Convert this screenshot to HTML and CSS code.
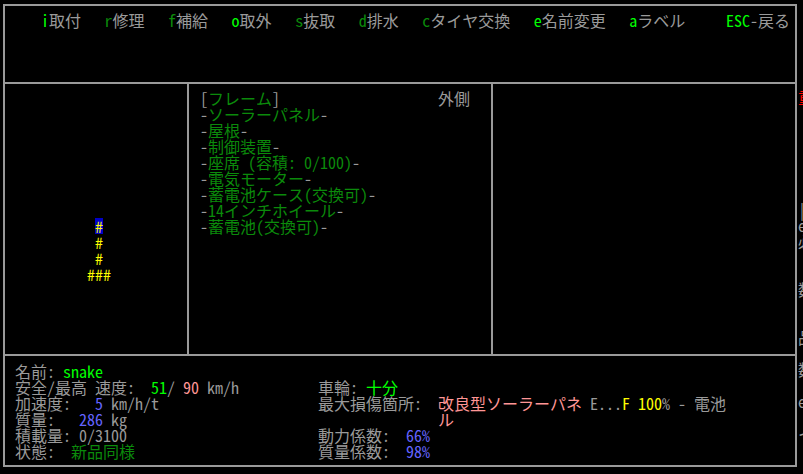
FILE: index.html
```html
<!DOCTYPE html>
<html>
  <head>
    <meta charset='utf-8'>
    <title>Vehicle Interaction</title>
    <link rel="stylesheet" href="styles.css">
  </head>
  <body>
    <div id='screen'>
      <div id='veh'>
        <div id='menu'>
          <span class='item'><span class='lgreen'>i</span>取付</span>
          <span class='item'><span class='green'>r</span>修理</span>
          <span class='item'><span class='green'>f</span>補給</span>
          <span class='item'><span class='lgreen'>o</span>取外</span>
          <span class='item'><span class='green'>s</span>抜取</span>
          <span class='item'><span class='green'>d</span>排水</span>
          <span class='item'><span class='green'>c</span>タイヤ交換</span>
          <span class='item'><span class='lgreen'>e</span>名前変更</span>
          <span class='item'><span class='lgreen'>a</span>ラベル</span>
          <span class='item esc'><span class='lgreen'>ESC</span>-戻る</span>
        </div>
        <div id='panes'>
          <div id='map'>
            <div class='tiles'>
              <span></span><span class='tile cursor'>#</span><span></span>
              <span></span><span class='tile'>#</span><span></span>
              <span></span><span class='tile'>#</span><span></span>
              <span class='tile'>#</span><span class='tile'>#</span><span class='tile'>#</span>
            </div>
          </div>
          <div id='parts'>
            <div class='part_head'><span>[<span class='green'>フレーム</span>]</span><span>外側</span></div>
            <div class='line'>-<span class='green'>ソーラーパネル</span>-</div>
            <div class='line'>-<span class='green'>屋根</span>-</div>
            <div class='line'>-<span class='green'>制御装置</span>-</div>
            <div class='line'>-<span class='green'>座席 (容積: 0/100)</span>-</div>
            <div class='line'>-<span class='green'>電気モーター</span>-</div>
            <div class='line'>-<span class='green'>蓄電池ケース(交換可)</span>-</div>
            <div class='line'>-<span class='green'>14インチホイール</span>-</div>
            <div class='line'>-<span class='green'>蓄電池(交換可)</span>-</div>
          </div>
          <div id='info'></div>
        </div>
        <div id='stats'>
          <div class='col left'>
            <div class='line'>名前: <span class='lgreen'>snake</span></div>
            <div class='line'>安全/最高 速度:  <span class='lgreen'>51</span>/ <span class='lred'>90</span> km/h</div>
            <div class='line'>加速度:   <span class='blue'>5</span> km/h/t</div>
            <div class='line'>質量:   <span class='blue'>286</span> kg</div>
            <div class='line'>積載量: 0/3100</div>
            <div class='line'>状態:  <span class='green'>新品同様</span></div>
          </div>
          <div class='col right'>
            <div class='line'> </div>
            <div class='line'>車輪: <span class='lgreen'>十分</span></div>
            <div class='line'>最大損傷箇所:  <span class='lred'>改良型ソーラーパネ</span> E...<span class='yellow'>F 100</span>% - 電池</div>
            <div class='line'>               <span class='lred'>ル</span></div>
            <div class='line'>動力係数:  <span class='blue'>66%</span></div>
            <div class='line'>質量係数:  <span class='blue'>98%</span></div>
          </div>
        </div>
      </div>
      <div id='edge'>
        <div class='line red'>重</div>
        <div class='line'> </div>
        <div class='line'> </div>
        <div class='line'> </div>
        <div class='line'> </div>
        <div class='line'> </div>
        <div class='line'> </div>
        <div class='line'>|</div>
        <div class='line'>e</div>
        <div class='line'>必</div>
        <div class='line'> </div>
        <div class='line'> </div>
        <div class='line'>数</div>
        <div class='line'> </div>
        <div class='line'> </div>
        <div class='line'>品</div>
        <div class='line'> </div>
        <div class='line'>数</div>
        <div class='line'> </div>
        <div class='line'>e</div>
        <div class='line'> </div>
        <div class='line'>イ</div>
      </div>
    </div>
  </body>
</html>
```

FILE: styles.css
```css
body {
  margin: 0;
  background: #000;
  color: #9a9a9a;
  font-family: "Noto Sans Mono CJK JP", "Noto Sans CJK JP", "DejaVu Sans Mono", monospace;
  font-size: 16px;
  line-height: 16px;
  overflow: hidden;
}

.line {
  white-space: pre;
  height: 16px;
}

#screen {
  display: flex;
  padding-top: 4px;
}

#veh {
  margin-left: 3px;
  width: 790px;
  border: 2px solid #9a9a9a;
}

#menu {
  height: 78px;
  box-sizing: border-box;
  padding: 6px 5px 0 36px;
  display: flex;
  align-items: flex-start;
  gap: 23.5px;
  border-bottom: 2px solid #9a9a9a;
}

#menu .item {
  white-space: pre;
}

#menu .esc {
  margin-left: auto;
}

#panes {
  display: flex;
  height: 270px;
  border-bottom: 2px solid #9a9a9a;
}

#map {
  width: 100px;
  border-right: 2px solid #9a9a9a;
  padding: 134px 0 0 82px;
}

.tiles {
  display: grid;
  grid-template-columns: 8px 8px 8px;
  grid-auto-rows: 16px;
}

.tile {
  color: #ffff00;
  text-align: center;
}

.cursor {
  background: #0000c8;
}

#parts {
  width: 270px;
  border-right: 2px solid #9a9a9a;
  padding: 6px 21px 0 11px;
}

.part_head {
  display: flex;
  justify-content: space-between;
  height: 16px;
}

#info {
  flex: 1;
}

#stats {
  height: 109px;
  box-sizing: border-box;
  padding: 7px 0 0 10px;
  display: flex;
}

#stats .left {
  width: 303px;
}

#edge {
  width: 5px;
  overflow: hidden;
  padding-top: 85px;
  padding-left: 1px;
}

.green {
  color: #0b8a0b;
}

.lgreen {
  color: #00ff00;
}

.lred {
  color: #ff9696;
}

.red {
  color: #ff0000;
}

.blue {
  color: #6464ff;
}

.yellow {
  color: #ffff00;
}
```
